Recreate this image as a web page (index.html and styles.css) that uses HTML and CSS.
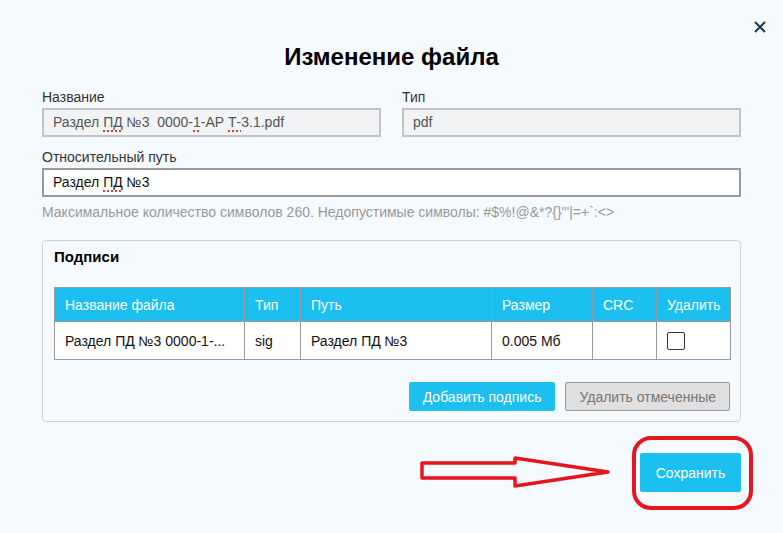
FILE: index.html
```html
<!DOCTYPE html>
<html lang="ru">

<head>
    <meta charset="UTF-8">
    <meta name="viewport" content="width=device-width, initial-scale=1.0">
    <title>Изменение файла</title>
    <link rel="stylesheet" href="styles.css">
</head>

<body>
    <div class="dialog">
        <button class="close" aria-label="Закрыть">
            <svg width="12" height="12" viewBox="0 0 12 12">
                <path d="M1 1 L11 11 M11 1 L1 11" stroke="#1d3a55" stroke-width="2" fill="none" />
            </svg>
        </button>

        <h1 class="title">Изменение файла</h1>

        <div class="row two">
            <div class="field">
                <label>Название</label>
                <div class="input readonly">Раздел <span class="spell">ПД</span> №3&nbsp; 0000-<span class="spell">1</span>-АР <span class="spell">Т-</span>3.1.pdf</div>
            </div>
            <div class="field">
                <label>Тип</label>
                <div class="input readonly">pdf</div>
            </div>
        </div>

        <div class="field path">
            <label>Относительный путь</label>
            <div class="input edit">Раздел <span class="spell">ПД</span> №3</div>
            <p class="hint">Максимальное количество символов 260. Недопустимые символы: #$%!@&amp;*?{}'"|=+`:&lt;&gt;</p>
        </div>

        <div class="panel">
            <h2>Подписи</h2>
            <table class="signs">
                <thead>
                    <tr>
                        <th class="c-name">Название файла</th>
                        <th class="c-type">Тип</th>
                        <th class="c-path">Путь</th>
                        <th class="c-size">Размер</th>
                        <th class="c-crc">CRC</th>
                        <th class="c-del">Удалить</th>
                    </tr>
                </thead>
                <tbody>
                    <tr>
                        <td>Раздел ПД №3 0000-1-...</td>
                        <td>sig</td>
                        <td>Раздел ПД №3</td>
                        <td>0.005 Мб</td>
                        <td></td>
                        <td><span class="check"></span></td>
                    </tr>
                </tbody>
            </table>
            <div class="panel-actions">
                <button class="btn primary">Добавить подпись</button>
                <button class="btn disabled">Удалить отмеченные</button>
            </div>
        </div>

        <div class="footer">
            <button class="btn primary save">Сохранить</button>
        </div>

        <!-- annotation drawn over the screenshot -->
        <svg class="marks" width="783" height="533" viewBox="0 0 783 533">
            <polygon points="422,463 515,463 515,458 608,472 515,486 515,478 422,478"
                fill="none" stroke="#e8141e" stroke-width="3.5" stroke-linejoin="round" />
            <rect x="634" y="438" width="117" height="70" rx="17" ry="17"
                fill="none" stroke="#e8141e" stroke-width="4" />
        </svg>
    </div>
</body>

</html>
```

FILE: styles.css
```css
* {
    box-sizing: border-box;
}

body {
    margin: 0;
    background: #f5faff;
    font-family: "Liberation Sans", Arial, sans-serif;
    font-size: 14px;
    color: #222;
}

.dialog {
    position: relative;
    width: 783px;
    height: 533px;
    padding: 43px 42px 0 42px;
}

.close {
    position: absolute;
    top: 21px;
    right: 17px;
    border: none;
    background: none;
    padding: 0;
    width: 12px;
    height: 12px;
    cursor: pointer;
}

.close svg {
    display: block;
}

.title {
    margin: 0;
    text-align: center;
    font-size: 24px;
    line-height: 28px;
    font-weight: bold;
    color: #000;
}

.row.two {
    margin-top: 18px;
    display: grid;
    grid-template-columns: 339px 339px;
    column-gap: 21px;
}

.field label {
    display: block;
    line-height: 16px;
    color: #333;
    margin-bottom: 3px;
}

.input {
    height: 29px;
    line-height: 25px;
    padding: 0 9px;
    border: 2px solid #c3c3c3;
    white-space: nowrap;
}

.input.readonly {
    background: #f1f3f5;
    color: #555;
}

.input.edit {
    background: #fff;
    border-color: #9a9a9a;
    color: #111;
}

.spell {
    text-decoration: underline dotted #e53935;
    text-decoration-thickness: 2px;
    text-underline-offset: 3px;
}

.field.path {
    margin-top: 12px;
}

.hint {
    margin: 7px 0 0 0;
    line-height: 16px;
    color: #999;
}

.panel {
    margin-top: 20px;
    border: 1px solid #cfd3d6;
    border-radius: 4px;
    padding: 7px 10px 10px 11px;
}

.panel h2 {
    margin: 0;
    font-size: 15px;
    line-height: 18px;
    color: #000;
}

.signs {
    margin-top: 21px;
    width: 676px;
    border-collapse: collapse;
    table-layout: fixed;
}

.signs th,
.signs td {
    border: 1px solid #9a9a9a;
    padding: 0 10px;
    text-align: left;
    font-weight: normal;
    white-space: nowrap;
}

.signs th {
    background: #1bbff0;
    color: #fff;
    height: 34px;
}

.signs td {
    background: #fff;
    color: #111;
    height: 38px;
}

.c-name { width: 190px; }
.c-type { width: 56px; }
.c-path { width: 191px; }
.c-size { width: 101px; }
.c-crc { width: 64px; }
.c-del { width: 74px; }

.check {
    display: block;
    width: 18px;
    height: 18px;
    border: 1px solid #333;
    border-radius: 2px;
    background: #fff;
}

.panel-actions {
    margin-top: 22px;
    display: flex;
    justify-content: flex-end;
    gap: 10px;
}

.btn {
    font-family: inherit;
    font-size: 14px;
    height: 29px;
    padding: 0 13px;
    border-radius: 2px;
    white-space: nowrap;
    cursor: pointer;
}

.btn.primary {
    background: #1bbff0;
    border: 1px solid #1bbff0;
    color: #fff;
}

.btn.disabled {
    background: #e0e0e0;
    border: 1px solid #999;
    color: #777;
}

.footer {
    margin-top: 31px;
    display: flex;
    justify-content: flex-end;
}

.btn.save {
    height: 39px;
    width: 101px;
    padding: 0;
}

.marks {
    position: absolute;
    left: 0;
    top: 0;
    pointer-events: none;
}
```
